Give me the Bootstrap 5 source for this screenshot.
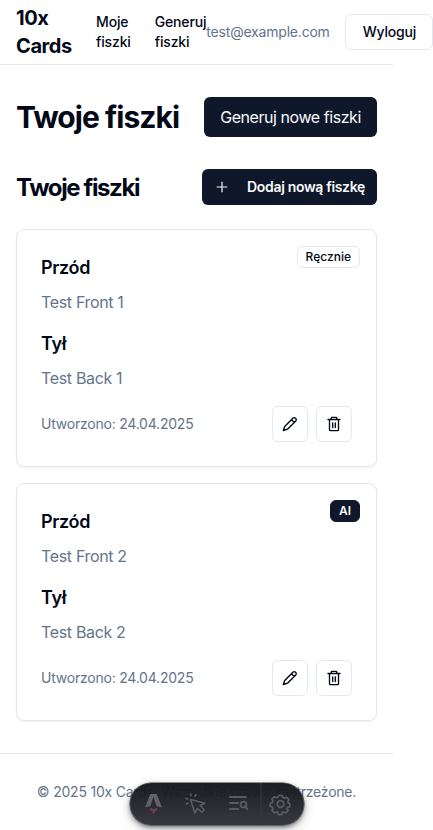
<!DOCTYPE html>
<html lang="pl">
<head>
<meta charset="utf-8">
<meta name="viewport" content="width=device-width, initial-scale=1">
<title>10x Cards</title>
<link href="https://cdn.jsdelivr.net/npm/bootstrap@5.3.0/dist/css/bootstrap.min.css" rel="stylesheet">
<style>
:root{--ink:#020817;--navy:#0f172a;--muted:#64748b;--line:#e2e8f0}
body{font-family:Inter,"Liberation Sans",sans-serif;color:var(--ink);font-size:16px;line-height:24px;overflow:hidden;height:830px}
.shell{width:393px}
.topbar{height:65px;border-bottom:1px solid var(--line)}
.brand{font-size:20px;line-height:28px;font-weight:700;width:56px;letter-spacing:-.4px}
.nav-a{font-size:14px;line-height:20px;font-weight:500;color:var(--ink);text-decoration:none;letter-spacing:-.15px}
.mail{font-size:14px;line-height:20px;color:var(--muted);width:123px;letter-spacing:-.2px;white-space:nowrap}
.btn-line{border:1px solid var(--line);border-radius:6px;background:#fff;color:var(--ink);font-size:14px;line-height:20px;font-weight:500;height:36px}
.btn-out{width:88px;letter-spacing:-.2px}
.btn-sq{width:36px;padding:0}
.btn-navy{background:var(--navy);color:#f8fafc;border:0;border-radius:6px;white-space:nowrap}
.btn-gen{width:173px;height:40px;font-size:16px;letter-spacing:-.44px;padding:0}
.btn-add{width:175px;height:36px;font-size:14px;font-weight:600;letter-spacing:-.33px;padding:0 12px}
.h-page{font-size:30px;line-height:36px;font-weight:700;letter-spacing:-.96px}
.h-sec{font-size:24px;line-height:32px;font-weight:700;letter-spacing:-1.38px;padding-top:1px}
.flash{border:1px solid var(--line);border-radius:8px;box-shadow:0 1px 2px rgba(0,0,0,.06);height:238px;padding:24px;background:#fff}
.flash h3{font-size:18px;line-height:28px;font-weight:600;letter-spacing:-.36px}
.flash p{color:var(--muted);letter-spacing:-.34px}
.made{font-size:14px;line-height:20px;color:var(--muted);letter-spacing:-.22px}
.tagbox{top:16px;right:16px;height:22px;border:1px solid var(--line);border-radius:6px;font-size:12px;line-height:20px;padding:0 8px;font-weight:500}
.tag-ai{background:var(--navy);border-color:var(--navy);color:#f8fafc;font-weight:600}
.foot{border-top:1px solid var(--line);height:77px;font-size:14px;line-height:20px;color:var(--muted);white-space:nowrap;letter-spacing:-.22px;margin-top:32px}
.devbar{left:130px;top:783px;width:174px;height:42px;border-radius:21px;background:linear-gradient(180deg,rgba(19,21,26,.96),rgba(50,50,57,.97));box-shadow:0 0 0 .5px #343841,0 2px 4px rgba(0,0,0,.45),0 4px 12px rgba(0,0,0,.25)}
</style>
<script src="https://cdn.jsdelivr.net/npm/bootstrap@5.3.0/dist/js/bootstrap.bundle.min.js"></script>
</head>
<body>
<svg class="d-none">
<symbol id="pencil" viewBox="0 0 16 16"><path d="M10.900 2.200q1.300-1.200 2.700.1t.2 2.700L5.500 13.200 1.400 14.500 2.700 10.400zM9.500 3.700l2.800 2.800" fill="none" stroke="currentColor" stroke-width="1.400" stroke-linecap="round" stroke-linejoin="round"/></symbol>
<symbol id="trash" viewBox="0 0 16 16"><path d="M2 3.500h12M5.300 3.300V2.100q0-.7.700-.7h4q.7 0 .7.700v1.200M3.500 3.500v10.200q0 .9.900.9h7.200q.9 0 .9-.9V3.500M6.700 6.800v4.700M9.300 6.800v4.700" fill="none" stroke="currentColor" stroke-width="1.350" stroke-linecap="round"/></symbol>
</svg>
<div class="shell">
<header class="topbar d-flex align-items-center justify-content-between ps-3">
<div class="d-flex align-items-center flex-shrink-0">
<div class="brand me-4">10x Cards</div>
<a class="nav-a me-4" href="#">Moje<br>fiszki</a>
<a class="nav-a" href="#">Generuj<br>fiszki</a>
</div>
<div class="d-flex align-items-center gap-3 flex-shrink-0">
<span class="mail">test@example.com</span>
<button class="btn-line btn-out">Wyloguj</button>
</div>
</header>
<main class="px-3 pt-4">
<div class="d-flex justify-content-between align-items-center pt-2 mb-4 pb-2">
<h1 class="h-page m-0">Twoje fiszki</h1>
<button class="btn-navy btn-gen">Generuj nowe fiszki</button>
</div>
<div class="d-flex justify-content-between align-items-center mb-4">
<h2 class="h-sec m-0">Twoje fiszki</h2>
<button class="btn-navy btn-add d-flex align-items-center justify-content-between"><svg width="16" height="16" viewBox="0 0 16 16"><path d="M8 2.700v10.600M2.700 8h10.600" stroke="#f8fafc" stroke-width="1.200"/></svg><span>Dodaj nową fiszkę</span></button>
</div>
<div class="d-flex flex-column gap-3">
<article class="flash position-relative">
<span class="tagbox position-absolute">Ręcznie</span>
<h3 class="mb-2">Przód</h3><p class="mb-3">Test Front 1</p>
<h3 class="mb-2">Tył</h3><p class="mb-3">Test Back 1</p>
<div class="d-flex align-items-center justify-content-between"><span class="made">Utworzono: 24.04.2025</span>
<div class="d-flex gap-2"><button class="btn-line btn-sq d-flex align-items-center justify-content-center" aria-label="Edytuj"><svg width="16" height="16"><use href="#pencil"/></svg></button><button class="btn-line btn-sq d-flex align-items-center justify-content-center" aria-label="Usuń"><svg width="16" height="16"><use href="#trash"/></svg></button></div></div>
</article>
<article class="flash position-relative">
<span class="tagbox tag-ai position-absolute">AI</span>
<h3 class="mb-2">Przód</h3><p class="mb-3">Test Front 2</p>
<h3 class="mb-2">Tył</h3><p class="mb-3">Test Back 2</p>
<div class="d-flex align-items-center justify-content-between"><span class="made">Utworzono: 24.04.2025</span>
<div class="d-flex gap-2"><button class="btn-line btn-sq d-flex align-items-center justify-content-center" aria-label="Edytuj"><svg width="16" height="16"><use href="#pencil"/></svg></button><button class="btn-line btn-sq d-flex align-items-center justify-content-center" aria-label="Usuń"><svg width="16" height="16"><use href="#trash"/></svg></button></div></div>
</article>
</div>
</main>
<footer class="foot d-flex align-items-center justify-content-center"><span>© 2025 10x Cards. Wszystkie prawa zastrzeżone.</span></footer>
</div>
<div class="devbar position-absolute">
<svg class="d-block" width="174" height="42" viewBox="0 0 174 42" fill="none" stroke="#5a5b60" stroke-width="1.6" stroke-linecap="round" stroke-linejoin="round">
<path d="M15 24.500L20.300 11h6.400L32 24.500q-2.500-1-5.300-1.300L23.500 14l-3.200 9.200q-2.800.3-5.300 1.300z" fill="#626267" stroke="none"/>
<path d="M19.500 24.800q4 1.800 8 0 .2 2.600-1.500 3.300l-.8-.6q.3 1.800-1.600 3.200-1.800-1.500-1.500-3.200l-1 .6q-1.600-.8-1.600-3.300z" fill="#703a5c" stroke="none"/>
<path d="M60.500 16.500l4.300 13.500 2.700-4.500 4.300 3.700 2.400-2.500-4-4.200 4.600-2.300zM61 11v1.700M66 11.800l-1.100 1.500M56 15.200l1.700.7M56.300 21l1.500-.8"/>
<path d="M100 14h16M100 20h8M100 26h8M117.300 26l-2.200-2.500" stroke-width="2"/><circle cx="113.500" cy="21.500" r="2.900" stroke-width="1.900"/>
<path d="M131 0v42" stroke="#343841" stroke-width="1.200"/>
<circle cx="150.500" cy="21" r="3.300" stroke-width="1.800"/>
<path d="M148.700 12.500h3.600l.5 2 1.700.8 1.900-1.100 2.500 2.500-1.100 1.900.8 1.700 1.100.3v.8l.3 2.200-2.200.5-.7 1.700 1 1.700-2.400 2.500-1.900-1-1.500.5-.5 2.100h-3.400l-.6-2.100-1.600-.6-1.900 1.100-2.400-2.500 1.100-1.900-.8-1.600-1.900-.6v-3.200l1.900-.5.800-1.700-1.100-1.900 2.500-2.400 1.900 1 1.700-.7z" stroke-width="1.700"/>
</svg>
</div>
</body>
</html>
